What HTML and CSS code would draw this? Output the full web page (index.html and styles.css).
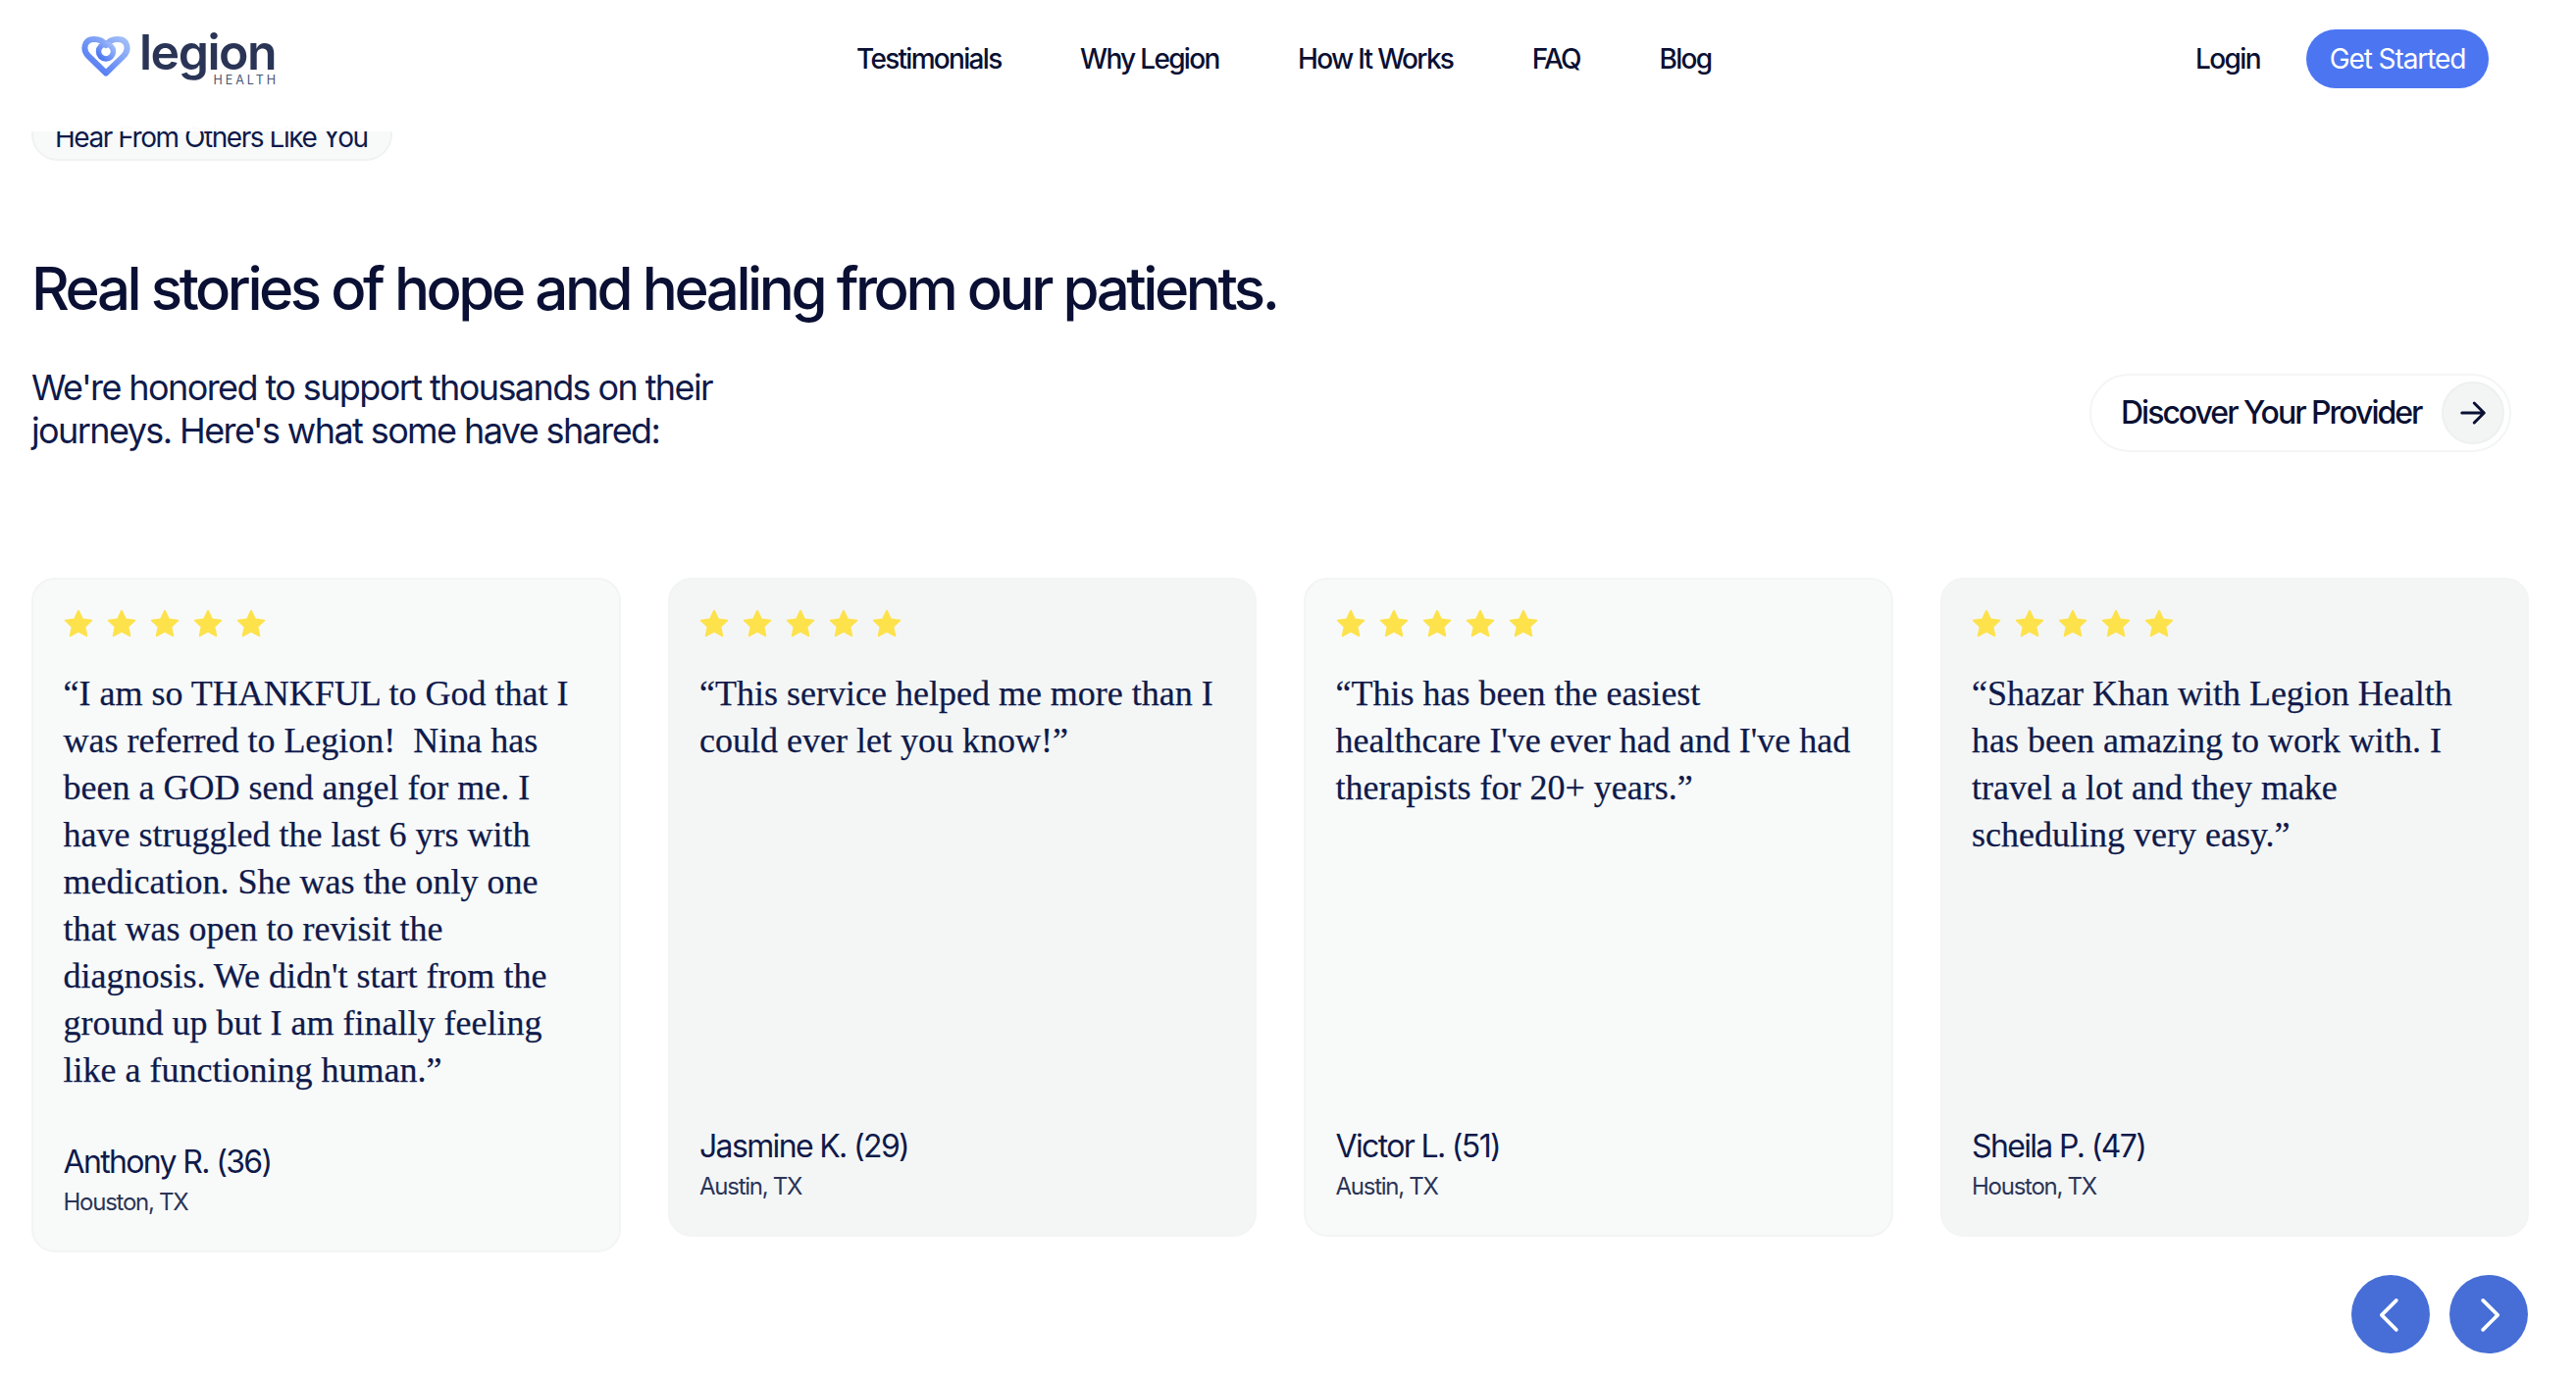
FILE: index.html
```html
<!DOCTYPE html>
<html lang="en">
<head>
<meta charset="utf-8">
<title>Legion Health</title>
<link rel="stylesheet" href="styles.css">
</head>
<body>
<header class="topbar">
  <a class="brand" href="#">
    <svg class="brand-mark" viewBox="0 0 50 44" aria-hidden="true">
      <defs>
        <linearGradient id="hg" x1="0" y1="1" x2="1" y2="0">
          <stop offset="0" stop-color="#4570f2"/>
          <stop offset="1" stop-color="#a3bff8"/>
        </linearGradient>
      </defs>
      <path d="M25 39.5 L7 22 C1 16 2.5 5 13 5 C18.5 5 23 8 25 11 C27 8 31.5 5 37 5 C47.5 5 49 16 43 22 Z" fill="none" stroke="url(#hg)" stroke-width="6" stroke-linejoin="round"/>
      <circle cx="25" cy="17.5" r="7.5" fill="none" stroke="url(#hg)" stroke-width="5.5"/>
    </svg>
    <span class="brand-text">
      <span class="brand-name">legion</span>
      <span class="brand-sub">HEALTH</span>
    </span>
  </a>
  <nav class="nav">
    <a href="#">Testimonials</a>
    <a href="#">Why Legion</a>
    <a href="#">How It Works</a>
    <a href="#">FAQ</a>
    <a href="#">Blog</a>
  </nav>
  <div class="actions">
    <a class="login" href="#">Login</a>
    <a class="cta" href="#">Get Started</a>
  </div>
</header>

<main class="page">
  <div class="pill">Hear From Others Like You</div>
  <h1 class="title">Real stories of hope and healing from our patients.</h1>
  <div class="intro">
    <p class="lead">We're honored to support thousands on their journeys. Here's what some have shared:</p>
    <a class="discover" href="#">
      <span>Discover Your Provider</span>
      <span class="discover-icon">
        <svg viewBox="0 0 24 24" aria-hidden="true"><path d="M3 12H21M13 4L21 12L13 20" fill="none" stroke="#0a1033" stroke-width="2.4" stroke-linecap="round" stroke-linejoin="round"/></svg>
      </span>
    </a>
  </div>

  <section class="carousel">
    <article class="card">
      <div class="stars"><svg viewBox="0 0 24 24"><use href="#star"/></svg><svg viewBox="0 0 24 24"><use href="#star"/></svg><svg viewBox="0 0 24 24"><use href="#star"/></svg><svg viewBox="0 0 24 24"><use href="#star"/></svg><svg viewBox="0 0 24 24"><use href="#star"/></svg></div>
      <p class="quote">“I am so THANKFUL to God that I was referred to Legion! &nbsp;Nina has been a GOD send angel for me. I have struggled the last 6 yrs with medication. She was the only one that was open to revisit the diagnosis. We didn't start from the ground up but I am finally feeling like a functioning human.”</p>
      <div class="who"><div class="name">Anthony R. (36)</div><div class="place">Houston, TX</div></div>
    </article>
    <article class="card">
      <div class="stars"><svg viewBox="0 0 24 24"><use href="#star"/></svg><svg viewBox="0 0 24 24"><use href="#star"/></svg><svg viewBox="0 0 24 24"><use href="#star"/></svg><svg viewBox="0 0 24 24"><use href="#star"/></svg><svg viewBox="0 0 24 24"><use href="#star"/></svg></div>
      <p class="quote">“This service helped me more than I could ever let you know!”</p>
      <div class="who"><div class="name">Jasmine K. (29)</div><div class="place">Austin, TX</div></div>
    </article>
    <article class="card">
      <div class="stars"><svg viewBox="0 0 24 24"><use href="#star"/></svg><svg viewBox="0 0 24 24"><use href="#star"/></svg><svg viewBox="0 0 24 24"><use href="#star"/></svg><svg viewBox="0 0 24 24"><use href="#star"/></svg><svg viewBox="0 0 24 24"><use href="#star"/></svg></div>
      <p class="quote">“This has been the easiest healthcare I've ever had and I've had therapists for 20+ years.”</p>
      <div class="who"><div class="name">Victor L. (51)</div><div class="place">Austin, TX</div></div>
    </article>
    <article class="card">
      <div class="stars"><svg viewBox="0 0 24 24"><use href="#star"/></svg><svg viewBox="0 0 24 24"><use href="#star"/></svg><svg viewBox="0 0 24 24"><use href="#star"/></svg><svg viewBox="0 0 24 24"><use href="#star"/></svg><svg viewBox="0 0 24 24"><use href="#star"/></svg></div>
      <p class="quote">“Shazar Khan with Legion Health has been amazing to work with. I travel a lot and they make scheduling very easy.”</p>
      <div class="who"><div class="name">Sheila P. (47)</div><div class="place">Houston, TX</div></div>
    </article>
    <article class="card" aria-hidden="true"></article>
  </section>

  <div class="pager">
    <button class="arrow" aria-label="Previous"><svg viewBox="0 0 24 24"><path d="M15.5 3.5L6.5 12.5L15.5 21.5" fill="none" stroke="#fff" stroke-width="2.2" stroke-linecap="round" stroke-linejoin="round"/></svg></button>
    <button class="arrow" aria-label="Next"><svg viewBox="0 0 24 24"><path d="M8.5 3.5L17.5 12.5L8.5 21.5" fill="none" stroke="#fff" stroke-width="2.2" stroke-linecap="round" stroke-linejoin="round"/></svg></button>
  </div>
</main>

<svg class="defs" aria-hidden="true"><defs><symbol id="star" viewBox="0 0 24 24"><path d="M12 1.6L15.2 8.4L22.6 9.3L17.1 14.4L18.6 21.8L12 18.1L5.4 21.8L6.9 14.4L1.4 9.3L8.8 8.4Z" fill="#fde24c" stroke="#fde24c" stroke-width="1.6" stroke-linejoin="round"/></symbol></defs></svg>
</body>
</html>
```

FILE: styles.css
```css
* { box-sizing: border-box; }
html, body { margin: 0; padding: 0; }
html { overflow: hidden; }
body {
  background: #fff;
  color: #0a1033;
  font-family: "Inter", "Liberation Sans", sans-serif;
  overflow: hidden;
  height: 1402px;
}
a { color: inherit; text-decoration: none; }
.defs { width: 0; height: 0; display: block; }

.topbar {
  position: absolute;
  top: 0; left: 0; right: 0;
  height: 134px;
  background: rgba(255, 255, 255, 0.985);
  display: flex;
  align-items: center;
  padding: 0 89px 14px 83px;
  z-index: 5;
}
.brand { display: flex; align-items: flex-start; gap: 9px; width: 790px; }
.brand-mark { width: 50px; height: 44px; margin-top: 3px; }
.brand-text { display: flex; flex-direction: column; align-items: flex-end; color: #2a3556; }
.brand-name { font-size: 50px; font-weight: 600; line-height: 42px; letter-spacing: -1.5px; }
.brand-sub { font-size: 12.5px; font-weight: 400; line-height: 13px; letter-spacing: 3px; margin-top: 1px; margin-right: -3px; color: #4a5475; }
.nav { display: flex; gap: 80.5px; font-size: 28px; font-weight: 500; letter-spacing: -1.7px; color: #0a1033; }
.actions { margin-left: auto; display: flex; align-items: center; gap: 47px; font-size: 28px; font-weight: 500; letter-spacing: -1.6px; }
.cta {
  background: #4c75f2;
  color: #fff;
  height: 60px;
  width: 186px;
  border-radius: 30px;
  display: flex;
  align-items: center;
  justify-content: center;
  font-weight: 400;
  letter-spacing: -1.1px;
}

.page { padding: 110px 0 0 32px; }
.pill {
  display: inline-block;
  height: 54px;
  width: 368px;
  padding: 0 0 0 22px;
  line-height: 57px;
  font-size: 28px;
  letter-spacing: -1.45px;
  background: #f8fafa;
  border: 2px solid #f0f2f2;
  border-radius: 27px;
  color: #0f1a4a;
  white-space: nowrap;
}
.title {
  margin: 94px 0 0;
  font-size: 60px;
  line-height: 72px;
  font-weight: 500;
  letter-spacing: -3.45px;
  color: #0a1033;
}
.intro {
  display: flex;
  justify-content: space-between;
  align-items: center;
  padding-right: 66px;
  margin-top: 44px;
}
.lead {
  margin: 0;
  width: 760px;
  font-size: 36px;
  line-height: 43.5px;
  color: #0f1a4a;
  letter-spacing: -1.6px;
}
.discover {
  display: flex;
  align-items: center;
  justify-content: space-between;
  width: 430px;
  height: 80px;
  margin-top: 6px;
  padding: 0 5px 0 30px;
  border: 2px solid #f4f5f5;
  border-radius: 40px;
  font-size: 32px;
  font-weight: 500;
  letter-spacing: -2px;
  white-space: nowrap;
}
.discover-icon {
  width: 64px; height: 64px;
  border-radius: 50%;
  background: #f3f5f5;
  border: 2px solid #eef0f0;
  display: flex;
  align-items: center;
  justify-content: center;
}
.discover-icon svg { width: 30px; height: 30px; }

.carousel {
  display: flex;
  align-items: flex-start;
  gap: 48px;
  margin-top: 128px;
}
.card {
  flex: 0 0 600.5px;
  min-height: 672px;
  display: flex;
  flex-direction: column;
  padding: 30px 37.5px 30px 30.5px;
  background: #f8fafa;
  border: 2px solid #f3f4f4;
  border-radius: 24px;
}
.card:nth-child(2) { background: #f4f6f6; }
.card:nth-child(4) { background: #f4f6f6; }
.stars { display: flex; gap: 14px; height: 32px; }
.stars svg { width: 30px; height: 30px; }
.quote {
  margin: 30px 0 48px;
  font-family: "Liberation Serif", serif;
  font-size: 36px;
  line-height: 48px;
  -webkit-text-stroke: 0.25px #0f1a4a;
  color: #0f1a4a;
}
.who { margin-top: auto; }
.name { font-size: 32px; line-height: 44px; color: #0f1a4a; letter-spacing: -1.65px; }
.place { font-size: 24px; line-height: 38px; color: #2a3556; letter-spacing: -1.26px; }

.pager { display: flex; justify-content: flex-end; gap: 20px; margin-top: 23px; width: 2545px; }
.arrow {
  width: 80px; height: 80px;
  border-radius: 50%;
  border: 0;
  padding: 0;
  background: #466ed6;
  display: flex;
  align-items: center;
  justify-content: center;
}
.arrow svg { width: 40px; height: 40px; }
```
